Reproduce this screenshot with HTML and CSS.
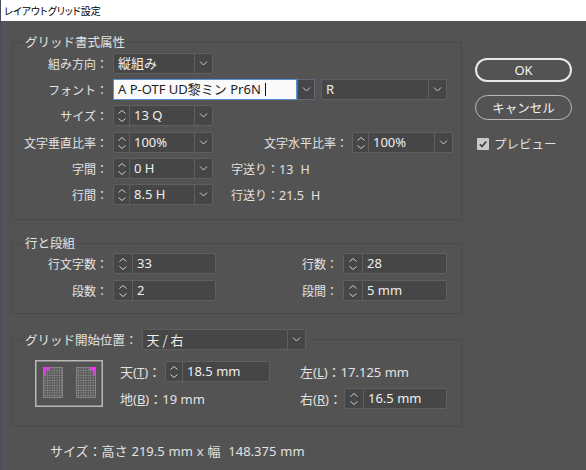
FILE: index.html
```html
<!DOCTYPE html>
<html lang="ja">
<head>
<meta charset="utf-8">
<title>レイアウトグリッド設定</title>
<link rel="stylesheet" href="styles.css">
</head>
<body>
<div class="titlebar">レイアウトグリッド設定</div>
<div class="main">
  <div class="left">
    <fieldset class="panel p1">
      <legend>グリッド書式属性</legend>
      <div class="rows">
        <div class="row">
          <span class="lbl">組み方向：</span>
          <div class="field w100">
            <span class="val">縦組み</span>
            <span class="arr"><svg width="9" height="5" viewBox="0 0 9 5"><path d="M1 0.5l3.5 3.5 3.5-3.5" fill="none" stroke="#cfcfcf"/></svg></span>
          </div>
        </div>
        <div class="row">
          <span class="lbl">フォント：</span>
          <div class="fontin">A P-OTF UD黎ミン Pr6N <span class="caret"></span></div>
          <span class="arrbox"><svg width="9" height="5" viewBox="0 0 9 5"><path d="M1 0.5l3.5 3.5 3.5-3.5" fill="none" stroke="#cfcfcf"/></svg></span>
          <div class="field wR">
            <span class="val">R</span>
            <span class="arr"><svg width="9" height="5" viewBox="0 0 9 5"><path d="M1 0.5l3.5 3.5 3.5-3.5" fill="none" stroke="#cfcfcf"/></svg></span>
          </div>
        </div>
        <div class="row">
          <span class="lbl">サイズ：</span>
          <div class="field w100">
            <span class="spin s16"><svg width="8" height="4" viewBox="0 0 8 4"><path d="M0.5 3.5l3.5-3 3.5 3" fill="none" stroke="#cfcfcf"/></svg><svg width="8" height="4" viewBox="0 0 8 4"><path d="M0.5 0.5l3.5 3 3.5-3" fill="none" stroke="#cfcfcf"/></svg></span>
            <span class="val">13 Q</span>
            <span class="arr"><svg width="9" height="5" viewBox="0 0 9 5"><path d="M1 0.5l3.5 3.5 3.5-3.5" fill="none" stroke="#cfcfcf"/></svg></span>
          </div>
        </div>
        <div class="row r4">
          <span class="lbl">文字垂直比率：</span>
          <div class="field w100">
            <span class="spin s16"><svg width="8" height="4" viewBox="0 0 8 4"><path d="M0.5 3.5l3.5-3 3.5 3" fill="none" stroke="#cfcfcf"/></svg><svg width="8" height="4" viewBox="0 0 8 4"><path d="M0.5 0.5l3.5 3 3.5-3" fill="none" stroke="#cfcfcf"/></svg></span>
            <span class="val">100%</span>
            <span class="arr"><svg width="9" height="5" viewBox="0 0 9 5"><path d="M1 0.5l3.5 3.5 3.5-3.5" fill="none" stroke="#cfcfcf"/></svg></span>
          </div>
          <span class="rlbl">文字水平比率：</span>
          <div class="field w101">
            <span class="spin s16"><svg width="8" height="4" viewBox="0 0 8 4"><path d="M0.5 3.5l3.5-3 3.5 3" fill="none" stroke="#cfcfcf"/></svg><svg width="8" height="4" viewBox="0 0 8 4"><path d="M0.5 0.5l3.5 3 3.5-3" fill="none" stroke="#cfcfcf"/></svg></span>
            <span class="val">100%</span>
            <span class="arr"><svg width="9" height="5" viewBox="0 0 9 5"><path d="M1 0.5l3.5 3.5 3.5-3.5" fill="none" stroke="#cfcfcf"/></svg></span>
          </div>
        </div>
        <div class="row">
          <span class="lbl">字間：</span>
          <div class="field w100">
            <span class="spin s16"><svg width="8" height="4" viewBox="0 0 8 4"><path d="M0.5 3.5l3.5-3 3.5 3" fill="none" stroke="#cfcfcf"/></svg><svg width="8" height="4" viewBox="0 0 8 4"><path d="M0.5 0.5l3.5 3 3.5-3" fill="none" stroke="#cfcfcf"/></svg></span>
            <span class="val">0 H</span>
            <span class="arr"><svg width="9" height="5" viewBox="0 0 9 5"><path d="M1 0.5l3.5 3.5 3.5-3.5" fill="none" stroke="#cfcfcf"/></svg></span>
          </div>
          <span class="info"><span class="ik">字送り：</span><span class="iv">13 H</span></span>
        </div>
        <div class="row">
          <span class="lbl">行間：</span>
          <div class="field w100">
            <span class="spin s16"><svg width="8" height="4" viewBox="0 0 8 4"><path d="M0.5 3.5l3.5-3 3.5 3" fill="none" stroke="#cfcfcf"/></svg><svg width="8" height="4" viewBox="0 0 8 4"><path d="M0.5 0.5l3.5 3 3.5-3" fill="none" stroke="#cfcfcf"/></svg></span>
            <span class="val">8.5 H</span>
            <span class="arr"><svg width="9" height="5" viewBox="0 0 9 5"><path d="M1 0.5l3.5 3.5 3.5-3.5" fill="none" stroke="#cfcfcf"/></svg></span>
          </div>
          <span class="info"><span class="ik">行送り：</span><span class="iv">21.5 H</span></span>
        </div>
      </div>
    </fieldset>

    <fieldset class="panel p2">
      <legend>行と段組</legend>
      <div class="rows g6">
        <div class="row">
          <span class="lbl">行文字数：</span>
          <div class="field w103">
            <span class="spin s18"><svg width="8" height="4" viewBox="0 0 8 4"><path d="M0.5 3.5l3.5-3 3.5 3" fill="none" stroke="#cfcfcf"/></svg><svg width="8" height="4" viewBox="0 0 8 4"><path d="M0.5 0.5l3.5 3 3.5-3" fill="none" stroke="#cfcfcf"/></svg></span>
            <span class="val">33</span>
          </div>
          <span class="rlbl2">行数：</span>
          <div class="field w104">
            <span class="spin s18"><svg width="8" height="4" viewBox="0 0 8 4"><path d="M0.5 3.5l3.5-3 3.5 3" fill="none" stroke="#cfcfcf"/></svg><svg width="8" height="4" viewBox="0 0 8 4"><path d="M0.5 0.5l3.5 3 3.5-3" fill="none" stroke="#cfcfcf"/></svg></span>
            <span class="val">28</span>
          </div>
        </div>
        <div class="row">
          <span class="lbl">段数：</span>
          <div class="field w103">
            <span class="spin s18"><svg width="8" height="4" viewBox="0 0 8 4"><path d="M0.5 3.5l3.5-3 3.5 3" fill="none" stroke="#cfcfcf"/></svg><svg width="8" height="4" viewBox="0 0 8 4"><path d="M0.5 0.5l3.5 3 3.5-3" fill="none" stroke="#cfcfcf"/></svg></span>
            <span class="val">2</span>
          </div>
          <span class="rlbl2">段間：</span>
          <div class="field w104">
            <span class="spin s18"><svg width="8" height="4" viewBox="0 0 8 4"><path d="M0.5 3.5l3.5-3 3.5 3" fill="none" stroke="#cfcfcf"/></svg><svg width="8" height="4" viewBox="0 0 8 4"><path d="M0.5 0.5l3.5 3 3.5-3" fill="none" stroke="#cfcfcf"/></svg></span>
            <span class="val">5 mm</span>
          </div>
        </div>
      </div>
    </fieldset>

    <fieldset class="panel p3">
      <legend class="leg3">
        <span class="leglbl">グリッド開始位置：</span>
        <div class="field w164">
          <span class="val">天 / 右</span>
          <span class="arr"><svg width="9" height="5" viewBox="0 0 9 5"><path d="M1 0.5l3.5 3.5 3.5-3.5" fill="none" stroke="#cfcfcf"/></svg></span>
        </div>
      </legend>
      <div class="startpos">
        <svg class="gicon" width="68" height="47" viewBox="0 0 68 47">
          <defs>
            <pattern id="gp" width="2.4" height="2.5" patternUnits="userSpaceOnUse">
              <path d="M0 0.3H2.4M0.3 0V2.5" stroke="#8e8e8e" stroke-width="0.6" fill="none"/>
            </pattern>
          </defs>
          <rect x="0.75" y="0.75" width="66.5" height="45.5" fill="none" stroke="#b8b8b8" stroke-width="1.5"/>
          <rect x="8.5" y="7.5" width="19" height="30" fill="url(#gp)" stroke="#8e8e8e" stroke-width="0.8"/>
          <rect x="41.5" y="7.5" width="19" height="30" fill="url(#gp)" stroke="#8e8e8e" stroke-width="0.8"/>
          <path d="M8 7h7v3h-4v5h-3z" fill="#e43be4"/>
          <path d="M61 7h-7v3h4v5h3z" fill="#e43be4"/>
        </svg>
        <div class="posgrid">
          <span class="plbl">天(<u>T</u>)：</span>
          <div class="field">
            <span class="spin s17"><svg width="8" height="4" viewBox="0 0 8 4"><path d="M0.5 3.5l3.5-3 3.5 3" fill="none" stroke="#cfcfcf"/></svg><svg width="8" height="4" viewBox="0 0 8 4"><path d="M0.5 0.5l3.5 3 3.5-3" fill="none" stroke="#cfcfcf"/></svg></span>
            <span class="val">18.5 mm</span>
          </div>
          <span class="plbl2">左(<u>L</u>)：17.125 mm</span>
          <span class="plbl3">地(<u>B</u>)：19 mm</span>
          <span class="plbl4">右(<u>R</u>)：</span>
          <div class="field f5">
            <span class="spin s18"><svg width="8" height="4" viewBox="0 0 8 4"><path d="M0.5 3.5l3.5-3 3.5 3" fill="none" stroke="#cfcfcf"/></svg><svg width="8" height="4" viewBox="0 0 8 4"><path d="M0.5 0.5l3.5 3 3.5-3" fill="none" stroke="#cfcfcf"/></svg></span>
            <span class="val">16.5 mm</span>
          </div>
        </div>
      </div>
    </fieldset>
  </div>

  <div class="right">
    <div class="btn ok">OK</div>
    <div class="btn cancel">キャンセル</div>
    <div class="preview">
      <svg width="12" height="12" viewBox="0 0 12 12"><rect x="0" y="0" width="12" height="12" rx="1" fill="#c9c9c9"/><path d="M2.8 6.3l2.2 2.2 4.2-5" fill="none" stroke="#3b3b3b" stroke-width="1.6"/></svg>
      <span>プレビュー</span>
    </div>
  </div>
</div>
<div class="summary">サイズ：高さ 219.5 mm x 幅&nbsp; 148.375 mm</div>
</body>
</html>
```
FILE: styles.css
```css
* { box-sizing: border-box; }
html, body { margin: 0; padding: 0; }
body {
  width: 586px;
  height: 470px;
  overflow: hidden;
  background: #535353;
  border-left: 1px solid #45505c;
  font-family: "Noto Sans", "Noto Sans CJK JP", sans-serif;
  font-size: 12px;
  color: #e2e2e2;
}
.titlebar {
  height: 21px;
  margin-left: -1px;
  background: #ffffff;
  color: #000;
  font-family: "Noto Sans CJK JP", sans-serif;
  font-size: 10px;
  line-height: 21px;
  padding-left: 4px;
  font-feature-settings: "palt";
}
.main { display: flex; }
.left { width: 461px; padding-left: 11px; }
.panel {
  margin: 0;
  padding: 0;
  border: 1px solid #4a4a4a;
  min-width: 0;
  width: 450px;
}
.panel legend {
  margin-left: 10px;
  padding: 0 2px;
  line-height: 14px;
  font-family: "Noto Sans CJK JP", sans-serif;
  font-size: 12.5px;
  color: #e2e2e2;
}
.p1 { margin-top: 14px; padding-top: 4px; padding-bottom: 14px; }
.p2 { margin-top: 16px; padding-top: 3px; padding-bottom: 12px; }
.p3 { margin-top: 15px; padding-top: 10px; padding-bottom: 17px; }
.rows { display: flex; flex-direction: column; gap: 5px; }
.rows.g6 { gap: 6px; }
.row { display: flex; align-items: center; height: 21px; }
.r4 { margin-top: 1px; }
.lbl {
  width: 95px;
  margin-right: 5px;
  text-align: right;
  white-space: nowrap;
  font-family: "Noto Sans CJK JP", sans-serif;
  line-height: 16px;
}
.rlbl {
  width: 135px;
  margin-right: 4px;
  text-align: right;
  white-space: nowrap;
  font-family: "Noto Sans CJK JP", sans-serif;
}
.rlbl2 {
  width: 122px;
  margin-right: 5px;
  text-align: right;
  white-space: nowrap;
  font-family: "Noto Sans CJK JP", sans-serif;
}
.info { margin-left: 18px; white-space: nowrap; display: flex; align-items: baseline; }
.ik { font-family: "Noto Sans CJK JP", sans-serif; font-size: 12px; }
.iv { font-size: 12.5px; word-spacing: 4px; }
.field {
  display: flex;
  height: 21px;
  border: 1px solid #5f5f5f;
  background: #464646;
  border-radius: 2px;
}
.w100 { width: 100px; }
.w101 { width: 101px; }
.w103 { width: 103px; }
.w104 { width: 104px; }
.wR { width: 126px; margin-left: 6px; }
.w164 { width: 164px; margin-left: 4px; }
.val {
  flex: 1;
  padding-left: 4px;
  line-height: 19px;
  font-size: 13px;
  color: #efefef;
  white-space: nowrap;
}
.arr {
  width: 18px;
  border-left: 1px solid #5f5f5f;
  display: flex;
  align-items: center;
  justify-content: center;
}
.spin {
  border-right: 1px solid #5f5f5f;
  display: flex;
  flex-direction: column;
  align-items: center;
  justify-content: center;
  gap: 4px;
}
.s16 { width: 16px; }
.s17 { width: 17px; }
.s18 { width: 19px; }
.spin svg, .arr svg { display: block; }
.fontin {
  width: 184px;
  height: 21px;
  background: #fafafa;
  border: 1px solid #5d8fd4;
  color: #1e1e1e;
  font-size: 13px;
  line-height: 19px;
  padding-left: 4px;
  white-space: nowrap;
  display: flex;
  align-items: center;
}
.caret {
  display: inline-block;
  width: 1px;
  height: 13px;
  background: #111;
  margin-left: 4px;
}
.arrbox {
  width: 18px;
  height: 21px;
  border: 1px solid #5f6a78;
  background: #464646;
  display: flex;
  align-items: center;
  justify-content: center;
}
.leg3 { display: flex; align-items: center; }
.leglbl { font-size: 12.5px; }
.startpos { display: flex; align-items: flex-start; }
.gicon { display: block; margin-left: 22px; }
.posgrid {
  margin-left: 17px;
  margin-top: 1px;
  display: grid;
  grid-template-columns: 45px 105px 30px 44px 103px;
  grid-template-rows: 21px 21px;
  row-gap: 6px;
  align-items: center;
  font-size: 13px;
}
.posgrid > span, .posgrid > div { min-width: 0; white-space: nowrap; }
.plbl { grid-column: 1; }
.plbl2 { grid-column: 4 / span 2; grid-row: 1; }
.plbl3 { grid-column: 1 / span 2; grid-row: 2; }
.plbl4 { grid-column: 4; grid-row: 2; }
.f5 { grid-column: 5; grid-row: 2; }
.posgrid u { text-decoration: underline; text-underline-offset: 1px; }
.right { width: 97px; margin-left: 13px; padding-top: 37px; }
.btn {
  width: 97px;
  text-align: center;
  color: #f4f4f4;
  font-family: "Noto Sans CJK JP", sans-serif;
  font-size: 12.5px;
}
.ok {
  height: 24px;
  line-height: 20px;
  border: 2px solid #e8e8e8;
  border-radius: 12px;
  font-family: "Noto Sans", sans-serif;
  font-size: 13px;
}
.cancel {
  margin-top: 13px;
  height: 25px;
  line-height: 23px;
  border: 1px solid #b9b9b9;
  border-radius: 12.5px;
}
.preview {
  margin-top: 18px;
  margin-left: 2px;
  display: flex;
  align-items: center;
  gap: 5px;
  font-family: "Noto Sans CJK JP", sans-serif;
  font-size: 12.5px;
  line-height: 12px;
}
.preview svg { display: block; }
.summary {
  margin-top: 16px;
  padding-left: 49px;
  line-height: 16px;
  font-size: 13px;
  word-spacing: 0.5px;
  color: #e2e2e2;
}
```
